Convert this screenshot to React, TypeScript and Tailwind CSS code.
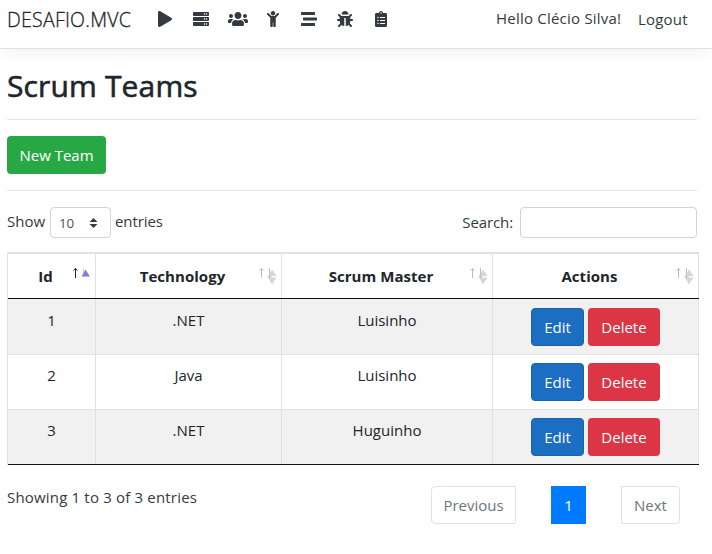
import React from "react";
import { FaPlay, FaServer, FaUsers, FaChild, FaStream, FaBug, FaClipboardList } from "react-icons/fa";

const rows = [
  { id: 1, technology: ".NET", master: "Luisinho" },
  { id: 2, technology: "Java", master: "Luisinho" },
  { id: 3, technology: ".NET", master: "Huguinho" },
];

const columns = "grid grid-cols-[88px_186px_211px_206px]";

function SortIcon({ ascending = false }: { ascending?: boolean }) {
  return (
    <svg className="absolute right-[4px] top-[11px]" width="22" height="22" viewBox="0 0 22 22" fill="none">
      <path d="M6.5 13V3.5M4.5 5.5l2-2 2 2" stroke={ascending ? "#212529" : "#bcbec0"} strokeWidth="1" />
      {ascending ? (
        <g>
          <path d="M14.5 3v9" stroke="#d3d4d5" />
          <path d="M12.5 11.5L16.5 4.5L21 11.5Z" fill="#7f7fd5" />
        </g>
      ) : (
        <g>
          <path d="M13 11L17 4.5L21.5 11Z M13 12.5L17 19.5L21.5 12.5Z" fill="#d6d6d6" />
          <path d="M14.5 3v10M12.5 11l2 2l2-2" stroke="#bcbec0" />
        </g>
      )}
    </svg>
  );
}

function HeaderCell({ label, ascending = false }: { label: string; ascending?: boolean }) {
  return (
    <div className="relative border-r border-[#dee2e6] pr-3 pt-[10px] text-center font-bold leading-6">
      <span className="tracking-[0.05px]">{label}</span>
      <SortIcon ascending={ascending} />
    </div>
  );
}

export default function App() {
  return (
    <div className="h-[554px] w-[712px] overflow-hidden bg-white font-['Open_Sans','Noto_Sans',sans-serif] text-[15px] leading-6 text-[#212529]">
      <nav className="flex h-[49px] items-start border-b border-[#dee2e6] pl-[7px] shadow-[0_4px_12px_rgba(0,0,0,0.05)]">
        <span className="mt-[5px] w-[151px] whitespace-nowrap text-[19.5px] font-light leading-[30px] tracking-[0.25px] [-webkit-text-stroke:0.3px]">DESAFIO.MVC</span>
        <div className="mt-[11px] flex h-4 items-center text-[#343a40]">
          <FaPlay className="mr-[21px] h-4 w-[14px]" />
          <FaServer className="mr-[19px] h-4 w-4" />
          <FaUsers className="mr-[19px] h-4 w-5" />
          <FaChild className="mr-[22px] h-4 w-3" />
          <FaStream className="mr-5 h-4 w-4" />
          <FaBug className="mr-[22px] h-4 w-4" />
          <FaClipboardList className="h-4 w-3" />
        </div>
        <span className="ml-auto mt-[6px] w-[142px] whitespace-nowrap tracking-[0.22px] text-[#343a40]">Hello Clécio Silva!</span>
        <span className="mt-[7px] w-[74px] tracking-[0.2px] text-[#343a40]">Logout</span>
      </nav>
      <main className="pl-[7px]">
        <h1 className="h-[71px] w-[690px] border-b border-[#e5e5e5] pt-[18px] text-[30px] leading-[38px] tracking-[0.15px] [-webkit-text-stroke:0.6px]">Scrum Teams</h1>
        <div className="flex h-[71px] w-[690px] items-start border-b border-[#e5e5e5] pt-[16px]">
          <button className="h-[38px] w-[99px] rounded bg-[#28a745] text-white">New Team</button>
        </div>
        <div className="mt-[16px] flex h-[31px] w-[690px] items-center">
          <span className="w-[43px] pb-[4px] text-[#343a40]">Show</span>
          <button className="flex h-[31px] w-[61px] items-center justify-between rounded border border-[#ced4da] pl-2 pr-[12px] text-[13.3px] text-[#495057]">
            <span>10</span>
            <svg width="9" height="10" viewBox="0 0 9 10" fill="#343a40"><path d="M0.5 4L4.5 0L8.5 4ZM0.5 6L4.5 10L8.5 6Z" /></svg>
          </button>
          <span className="ml-[4px] pb-[4px] tracking-[-0.1px] text-[#343a40]">entries</span>
          <span className="ml-auto mr-[7px] pb-[2px] tracking-[-0.1px] text-[#343a40]">Search:</span>
          <input className="h-[31px] w-[177px] rounded border border-[#ced4da]" aria-label="Search" />
        </div>
        <div className="mt-[14px] w-[692px] border-l border-[#dee2e6]">
          <div className={`${columns} h-[47px] border-b border-b-[#111] border-t-2 border-t-[#dee2e6]`}>
            <HeaderCell label="Id" ascending />
            <HeaderCell label="Technology" />
            <HeaderCell label="Scrum Master" />
            <HeaderCell label="Actions" />
          </div>
          {rows.map((row) => (
            <div key={row.id} className={`${columns} border-b text-center ${row.id === 3 ? "h-[55px] border-[#111]" : row.id === 1 ? "h-14 border-[#dee2e6]" : "h-[55px] border-[#dee2e6]"} ${row.id === 2 ? "bg-white" : "bg-[#f1f1f1]"}`}>
              <div className={`border-r border-[#dee2e6] ${row.id === 1 ? "pt-[9px]" : "pt-[8px]"}`}>{row.id}</div>
              <div className={`border-r border-[#dee2e6] ${row.id === 1 ? "pt-[9px]" : "pt-[8px]"}`}>{row.technology}</div>
              <div className={`border-r border-[#dee2e6] ${row.id === 1 ? "pt-[9px]" : "pt-[8px]"}`}>{row.master}</div>
              <div className={`flex items-start justify-center gap-1 border-r border-[#dee2e6] ${row.id === 1 ? "pt-[9px]" : "pt-2"}`}>
                <button className="h-[38px] w-[53px] rounded border border-[#1861ac] bg-[#1b6ec2] text-white">Edit</button>
                <button className="h-[38px] w-[72px] rounded bg-[#dc3545] text-white">Delete</button>
              </div>
            </div>
          ))}
        </div>
        <div className="flex w-[673px] items-start pt-[21px]">
          <span className="-mt-px tracking-[0.18px] text-[#343a40]">Showing 1 to 3 of 3 entries</span>
          <div className="ml-auto flex gap-[35px] text-[#6c757d]">
            <button className="h-[38px] w-[85px] rounded-l border border-[#dee2e6]">Previous</button>
            <button className="h-[38px] w-[35px] bg-[#007bff] text-white">1</button>
            <button className="h-[38px] w-[59px] rounded-r border border-[#dee2e6]">Next</button>
          </div>
        </div>
      </main>
    </div>
  );
}
